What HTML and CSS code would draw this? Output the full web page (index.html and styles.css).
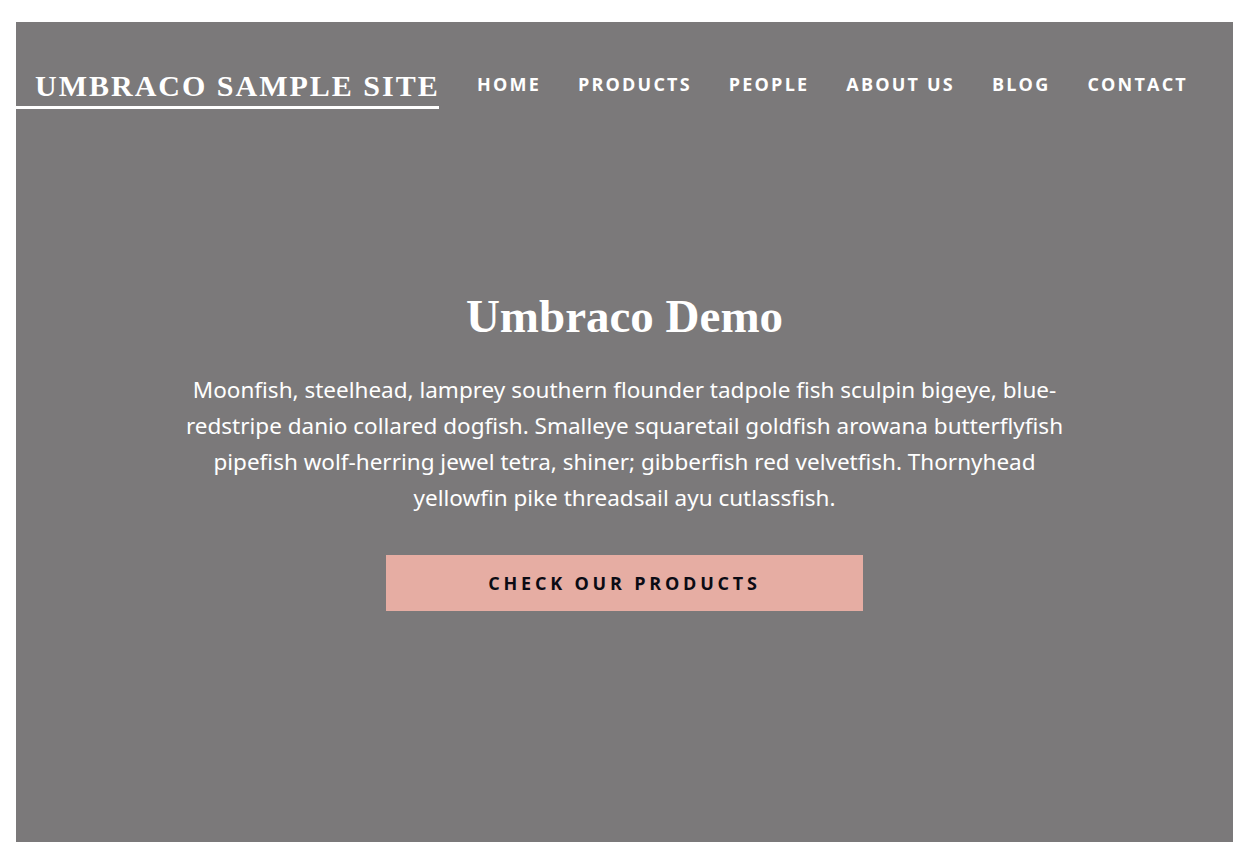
FILE: index.html
```html
<!DOCTYPE html>
<html lang="en">
<head>
    <meta charset="UTF-8">
    <meta name="viewport" content="width=device-width, initial-scale=1.0">
    <title>Umbraco Sample Site</title>
    <link rel="stylesheet" href="styles.css">
</head>
<body>
    <section class="hero">
        <header class="site-header">
            <a class="logo" href="#">Umbraco Sample Site</a>
            <nav class="main-nav">
                <a href="#">Home</a>
                <a href="#">Products</a>
                <a href="#">People</a>
                <a href="#">About Us</a>
                <a href="#">Blog</a>
                <a href="#">Contact</a>
            </nav>
        </header>

        <div class="hero-content">
            <h1>Umbraco Demo</h1>
            <p>Moonfish, steelhead, lamprey southern flounder tadpole fish sculpin bigeye, blue-redstripe danio collared dogfish. Smalleye squaretail goldfish arowana butterflyfish pipefish wolf-herring jewel tetra, shiner; gibberfish red velvetfish. Thornyhead yellowfin pike threadsail ayu cutlassfish.</p>
            <a class="button" href="#">Check our products</a>
        </div>
    </section>
</body>
</html>
```

FILE: styles.css
```css
body {
    margin: 22px 10px 0 16px;
    background-color: #fff;
    font-family: "Noto Sans", "Open Sans", sans-serif;
}
a {
    text-decoration: none;
    color: inherit;
}
.hero {
    background-color: #7b797a;
    min-height: 820px;
    color: #fff;
}
.site-header {
    display: flex;
    align-items: flex-start;
    padding-top: 47px;
}
.logo {
    display: block;
    font-family: "Liberation Serif", serif;
    font-weight: bold;
    font-size: 30px;
    letter-spacing: 2px;
    text-transform: uppercase;
    white-space: nowrap;
    line-height: 34px;
    padding: 0 0 3px 19px;
    border-bottom: 3px solid #fff;
    width: 404px;
}
.main-nav {
    display: flex;
    gap: 37px;
    margin-left: 38px;
    padding-top: 2px;
}
.main-nav a {
    font-family: "Open Sans", sans-serif;
    font-weight: bold;
    font-size: 18px;
    letter-spacing: 2.2px;
    text-transform: uppercase;
    line-height: 26px;
}
.hero-content {
    max-width: 900px;
    margin: 0 auto;
    padding-top: 179px;
    text-align: center;
}
.hero-content h1 {
    font-family: "Liberation Serif", serif;
    font-weight: bold;
    font-size: 47px;
    line-height: 56px;
    margin: 0 0 28px;
}
.hero-content p {
    font-size: 22.5px;
    line-height: 36px;
    margin: 0 0 39px;
}
.button {
    display: inline-block;
    width: 477px;
    box-sizing: border-box;
    padding: 15px 0;
    height: 56px;
    background-color: #e6ada3;
    color: #0b0b14;
    font-family: "Open Sans", sans-serif;
    font-weight: bold;
    font-size: 18px;
    letter-spacing: 3.8px;
    text-transform: uppercase;
    line-height: 26px;
}
```
